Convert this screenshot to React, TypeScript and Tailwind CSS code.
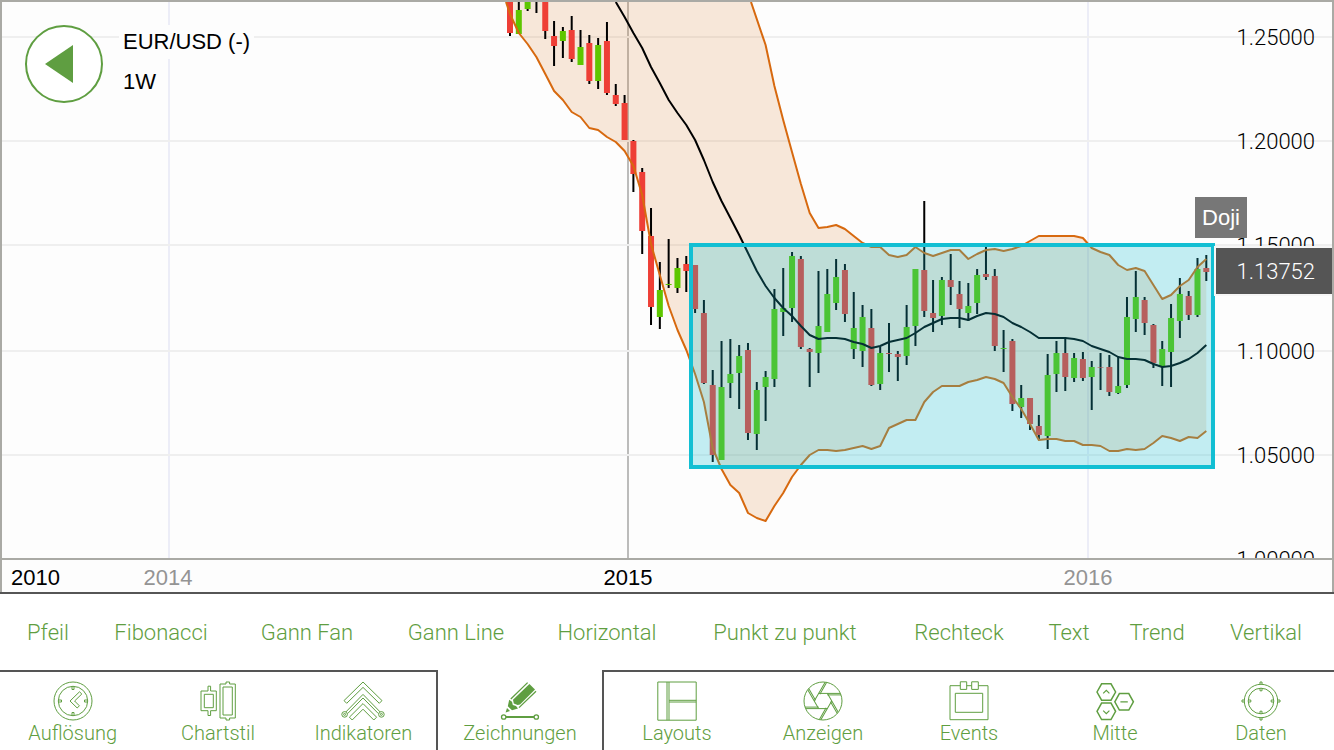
import type { ReactNode } from "react";

// Price scale and candles are stored in chart units (1334 x 592 canvas).
const START_X = 510;
const STEP = 8.814;

type Candle = [high: number, top: number, bottom: number, low: number, up: 0 | 1];

const candles: Candle[] = [
  [2, 2, 33, 36, 0],
  [2, 10, 34, 34, 1],
  [2, 2, 9, 11, 1],
  [2, 2, 2, 13, 1],
  [2, 2, 31, 39, 0],
  [21, 36, 46, 66, 0],
  [27, 31, 41, 58, 1],
  [16, 30, 59, 62, 0],
  [30, 47, 65, 65, 1],
  [35, 43, 81, 84, 0],
  [38, 45, 81, 89, 1],
  [22, 41, 93, 95, 0],
  [84, 95, 104, 106, 0],
  [95, 103, 140, 140, 0],
  [140, 141, 174, 192, 0],
  [168, 172, 231, 254, 0],
  [208, 236, 307, 325, 0],
  [262, 290, 317, 329, 1],
  [239, 284, 285, 288, 1],
  [258, 268, 288, 293, 1],
  [256, 264, 271, 292, 0],
  [265, 265, 309, 313, 0],
  [300, 313, 383, 384, 0],
  [370, 385, 455, 462, 0],
  [341, 387, 460, 460, 1],
  [339, 374, 383, 398, 1],
  [345, 356, 373, 409, 1],
  [343, 350, 433, 440, 0],
  [382, 390, 434, 450, 1],
  [371, 377, 387, 421, 1],
  [289, 309, 379, 387, 1],
  [268, 308, 312, 336, 1],
  [252, 256, 308, 322, 1],
  [256, 259, 347, 349, 0],
  [348, 349, 352, 387, 0],
  [271, 326, 353, 373, 1],
  [269, 294, 332, 332, 1],
  [259, 277, 303, 310, 1],
  [264, 270, 314, 322, 0],
  [292, 328, 349, 359, 1],
  [305, 317, 351, 367, 1],
  [309, 328, 385, 386, 0],
  [347, 353, 384, 390, 1],
  [323, 353, 354, 372, 0],
  [351, 354, 357, 381, 0],
  [305, 327, 356, 365, 1],
  [269, 269, 326, 346, 1],
  [201, 270, 311, 317, 0],
  [280, 313, 318, 332, 0],
  [277, 280, 316, 325, 1],
  [254, 280, 287, 305, 0],
  [281, 294, 309, 328, 0],
  [283, 306, 313, 321, 1],
  [269, 275, 303, 314, 1],
  [246, 274, 277, 280, 0],
  [269, 276, 346, 351, 0],
  [330, 348, 349, 372, 1],
  [339, 341, 404, 411, 0],
  [385, 398, 407, 418, 1],
  [398, 398, 424, 430, 0],
  [415, 426, 435, 439, 0],
  [354, 375, 436, 449, 1],
  [341, 353, 374, 392, 1],
  [338, 353, 377, 391, 0],
  [353, 358, 378, 382, 1],
  [352, 359, 378, 381, 0],
  [361, 367, 377, 410, 1],
  [353, 367, 367, 390, 0],
  [355, 367, 392, 396, 0],
  [357, 386, 393, 394, 1],
  [297, 317, 385, 388, 1],
  [271, 297, 319, 332, 1],
  [297, 300, 323, 335, 0],
  [324, 325, 363, 368, 0],
  [341, 349, 367, 386, 1],
  [304, 318, 352, 387, 1],
  [278, 294, 321, 338, 1],
  [291, 296, 315, 320, 0],
  [258, 269, 315, 317, 1],
  [255, 268, 272, 281, 0],
];

// Bollinger band, one value per candle
const upper = [
  45, 86, 120, 152, 184, 213, 228, 227, 225, 229, 236, 243, 247, 247, 255, 257,
  255, 247, 253, 256, 253, 250, 250, 259, 254, 250, 249, 251, 249, 246, 241,
  236, 236, 236, 236, 236, 238, 248, 252, 255, 265, 270, 268, 271, 285, 299,
  295, 286, 280, 267, 259,
];
const lower = [
  14, 33, 44, 57, 74, 91, 100, 112, 117, 128, 130, 137, 142, 151, 166, 195, 244,
  275, 306, 330, 350, 374, 402, 448, 469, 485, 493, 513, 518, 521, 506, 493,
  477, 465, 455, 450, 450, 451, 450, 448, 446, 449, 446, 428, 424, 420, 420,
  402, 392, 386, 386, 386, 382, 380, 377, 379, 383, 397, 409, 424, 440, 439,
  439, 441, 441, 445, 445, 446, 451, 451, 449, 450, 449, 443, 436, 438, 441,
  437, 438, 431,
];
const middle = [
  2, 17, 33, 48, 67, 83, 100, 113, 125, 140, 160, 182, 201, 218, 235, 253, 271,
  286, 298, 308, 316, 326, 335, 339, 338, 338, 339, 342, 344, 348, 346, 342,
  340, 338, 333, 327, 323, 319, 318, 318, 320, 316, 313, 314, 317, 323, 327,
  332, 338, 338, 338, 338, 339, 341, 346, 349, 352, 357, 359, 359, 360, 364,
  367, 366, 363, 359, 353, 345,
];

const xAt = (i: number) => START_X + i * STEP;

// series are right-aligned to the last candle
const toPoints = (values: number[]) => {
  const offset = candles.length - values.length;
  return values.map((y, i) => `${xAt(i + offset).toFixed(1)},${y}`);
};

const upperPoints = ["751,2", ...toPoints(upper)];
const lowerPoints = ["506,2", ...toPoints(lower)];
const middlePoints = toPoints(middle);

const prices = [
  { label: "1.25000", y: 37 },
  { label: "1.20000", y: 141 },
  { label: "1.15000", y: 245 },
  { label: "1.10000", y: 351 },
  { label: "1.05000", y: 455 },
  { label: "1.00000", y: 559 },
];

function Chart() {
  return (
    <svg
      viewBox="0 0 1334 592"
      className="block w-full font-['Liberation_Sans',Arial,sans-serif] text-[22px]"
      role="img"
      aria-label="EUR/USD 1W"
    >
      <defs>
        <clipPath id="plot">
          <rect x="2" y="2" width="1330" height="556" />
        </clipPath>
      </defs>
      <rect width="1334" height="592" fill="#fdfdfd" />

      <g clipPath="url(#plot)">
        <path d="M169 2V558M1088 2V558" stroke="#ecedf7" strokeWidth="2" />
        <path d="M628 2V558" stroke="#bcbcbb" strokeWidth="2" />
        {prices.map((p) => (
          <path key={p.label} d={`M2 ${p.y}H1332`} stroke="#efefef" strokeWidth="2" />
        ))}
        <g className="font-['Roboto','Liberation_Sans',sans-serif] font-light">
          {prices.map((p) => (
            <text key={p.label} x="1315" y={p.y + 8} textAnchor="end" fill="#000">
              {p.label}
            </text>
          ))}
        </g>

        <polygon
          points={[...upperPoints, ...[...lowerPoints].reverse()].join(" ")}
          fill="#d7690f"
          fillOpacity="0.15"
        />
        {candles.map(([high, top, bottom, low, up], i) => (
          <g key={i}>
            <rect x={xAt(i) - 1} y={high} width="2" height={low - high} fill="#000" />
            {i !== 3 && (
              <rect
                x={xAt(i) - 3}
                y={top}
                width="6"
                height={Math.max(bottom - top, 0.6)}
                fill={up ? "#5ec600" : "#ee3f36"}
              />
            )}
          </g>
        ))}
        <g fill="none" strokeWidth="2" strokeLinejoin="round">
          <polyline points={upperPoints.join(" ")} stroke="#d7690f" />
          <polyline points={lowerPoints.join(" ")} stroke="#d7690f" />
          <polyline points={middlePoints.join(" ")} stroke="#000" />
        </g>
      </g>

      {/* drawn rectangle */}
      <rect x="691" y="245" width="522" height="222" fill="#12bfd3" fillOpacity="0.25" />
      <rect x="691" y="245" width="522" height="222" fill="none" stroke="#12bfd3" strokeWidth="4" />

      <rect x="1195" y="197" width="52" height="41" fill="#777" />
      <text x="1221" y="225" textAnchor="middle" fill="#fff">
        Doji
      </text>
      <rect x="1214" y="246" width="118" height="50" fill="#f6f6f6" />
      <rect x="1216" y="248" width="116" height="46" fill="#555" />
      <text
        x="1315"
        y="279"
        textAnchor="end"
        fill="#fff"
        className="font-['Roboto','Liberation_Sans',sans-serif] font-light"
      >
        1.13752
      </text>

      {/* frame and time axis */}
      <path d="M1 592V1H1333V592M0 559H1334" fill="none" stroke="#aaaaa5" strokeWidth="2" />
      <text x="11" y="585" fill="#000">2010</text>
      <text x="168" y="585" textAnchor="middle" fill="#949494">2014</text>
      <text x="628" y="585" textAnchor="middle" fill="#000">2015</text>
      <text x="1088" y="585" textAnchor="middle" fill="#949494">2016</text>
    </svg>
  );
}

function Icon({ children }: { children: ReactNode }) {
  return (
    <svg
      viewBox="0 0 40 40"
      className="size-10 overflow-visible"
      fill="none"
      stroke="currentColor"
      strokeWidth="1"
      aria-hidden="true"
    >
      {children}
    </svg>
  );
}

const quarter = [0, 90, 180, 270];

const ClockIcon = () => (
  <Icon>
    <circle cx="20" cy="20" r="19" />
    <circle cx="20" cy="20" r="14.7" />
    {quarter.map((a) => (
      <path key={a} d="M19 5.3V8.5H21V5.3" transform={`rotate(${a} 20 20)`} />
    ))}
    <path d="M26.5 10.8L28.8 13L21.6 20L26.4 24.8L24.2 27L17 20Z" />
  </Icon>
);

const CandleIcon = () => (
  <Icon>
    <path d="M10 10V5.2H12.6V10H18.3V29.7H12.6V34.5H10V29.7H3V10Z" />
    <path d="M6.3 13.3H15.3V26.7H6.3Z" />
    <path d="M28 3V1H31.6V3H37.3V37H31.6V39H28V37H22V3Z" />
    <path d="M25 6H34.3V34H25Z" />
  </Icon>
);

const IndicatorIcon = () => (
  <Icon>
    <path d="M20 1L39 19.6L36.3 22.3L20 6.4L3.7 22.3L1 19.6Z" />
    <path d="M2.8 31L20 13.4L37.2 31M4.6 32.6L20 17L35.4 32.6" />
    <circle cx="1.6" cy="33.4" r="2.8" />
    <circle cx="38.4" cy="33.4" r="2.8" />
    <circle cx="1.6" cy="33.4" r="1" />
    <circle cx="38.4" cy="33.4" r="1" />
    <path d="M20 22.6L33.6 36.2L30.8 39L20 28.2L9.2 39L6.4 36.2Z" />
  </Icon>
);

const PencilIcon = () => (
  <Icon>
    <path d="M6 36H34" strokeWidth="2" />
    <circle cx="3.7" cy="36" r="2.2" strokeWidth="1.3" />
    <circle cx="36.3" cy="36" r="2.2" strokeWidth="1.3" />
    <path d="M29.4 3L35 8.4L20 23.4L17.6 24L13.8 22.4L13 18.8Z" fill="currentColor" stroke="none" />
    <path d="M27.6 1.6L10.8 18M36 10.2L19 26.6" strokeWidth="1.3" />
    <path
      d="M9.2 18.8L12 20.8L12.8 24L16 25L18 27.4L12 29.2L7.8 25.2Z"
      fill="currentColor"
      stroke="none"
    />
    <path d="M7 27L10 30L5.6 31.6Z" fill="currentColor" stroke="none" />
  </Icon>
);

const LayoutIcon = () => (
  <Icon>
    <path d="M0.8 1H39.2V39.2H0.8Z" />
    <path d="M10 1V39.2M12 1V39.2M12 19.3H39.2M12 21H39.2" />
  </Icon>
);

const ApertureIcon = () => (
  <Icon>
    <circle cx="20" cy="20" r="19" />
    {[0, 60, 120, 180, 240, 300].map((a) => (
      <path key={a} d="M15.7 12.4H37.4M24.4 13.9H38" transform={`rotate(${a} 20 20)`} />
    ))}
  </Icon>
);

const CalendarIcon = () => (
  <Icon>
    <path d="M11.3 4.7H1V38.7H39V4.7H29.3M17.7 4.7H22.7" />
    <path d="M11.3 0.8H17.7V8.4H11.3ZM22.7 0.8H29.3V8.4H22.7Z" />
    <path d="M6.3 12.3H33.7V31.3H6.3Z" />
  </Icon>
);

const HexIcon = () => (
  <Icon>
    <g strokeWidth="1.5">
      <path d="M2 11L6.6 2.8H16L20.6 11L16 19.2H6.6Z" />
      <path d="M2 30.3L6.6 22.1H16L20.6 30.3L16 38.5H6.6Z" />
      <path d="M19.8 20.8L24.4 12.6H33.8L38.4 20.8L33.8 29H24.4Z" />
    </g>
    <path d="M8.2 12.4L11.3 9.4L14.4 12.4M8.2 29.6L11.3 32.6L14.4 29.6M25.4 20.8H32.8" strokeWidth="1.2" />
  </Icon>
);

const TargetIcon = () => (
  <Icon>
    <circle cx="20" cy="20" r="16.7" />
    <circle cx="20" cy="20" r="12.8" />
    {quarter.map((a) => (
      <path
        key={a}
        d="M19 3.3V1H21V3.3M19 7.3V9.8H21V7.3"
        transform={`rotate(${a} 20 20)`}
      />
    ))}
  </Icon>
);

const tools = [
  "Pfeil",
  "Fibonacci",
  "Gann Fan",
  "Gann Line",
  "Horizontal",
  "Punkt zu punkt",
  "Rechteck",
  "Text",
  "Trend",
  "Vertikal",
];

function Tab({ label, children }: { label: string; children: ReactNode }) {
  return (
    <button type="button" className="flex flex-col items-center pt-[9px] text-xl leading-6">
      {children}
      {label}
    </button>
  );
}

export default function App() {
  return (
    <main className="flex min-h-screen flex-col bg-white font-['Liberation_Sans',Arial,sans-serif] text-[#5f9e41]">
      <section className="relative border-b-2 border-[#555]">
        <Chart />
        <div className="absolute top-[25px] left-[25px] flex gap-4">
          <button
            type="button"
            aria-label="Zurück"
            className="size-[78px] rounded-full border-2 border-[#5f9e41] bg-white"
          >
            <svg viewBox="0 0 74 74" className="size-full" fill="currentColor">
              <path d="M18 37L46 18V56Z" />
            </svg>
          </button>
          <div className="flex flex-col items-start gap-1.5 text-[22px] leading-[34px] text-black">
            <h1 className="bg-[#fdfdfd] px-1">EUR/USD (-)</h1>
            <p className="px-1">1W</p>
          </div>
        </div>
      </section>

      <nav
        aria-label="Zeichenwerkzeuge"
        className="grid h-[76px] grid-cols-[96fr_130fr_162fr_136fr_166fr_190fr_158fr_62fr_114fr_104fr] pr-4 font-['Roboto','Liberation_Sans',sans-serif] text-[22px] font-light"
      >
        {tools.map((tool) => (
          <button key={tool} type="button" className="whitespace-nowrap">
            {tool}
          </button>
        ))}
      </nav>

      <nav
        aria-label="Menü"
        className="grid min-h-20 grow grid-cols-[438fr_164fr_732fr] font-['Roboto','Liberation_Sans',sans-serif] font-light"
      >
        <div className="grid grid-cols-3 border-t-2 border-r-2 border-[#555]">
          <Tab label="Auflösung">
            <ClockIcon />
          </Tab>
          <Tab label="Chartstil">
            <CandleIcon />
          </Tab>
          <Tab label="Indikatoren">
            <IndicatorIcon />
          </Tab>
        </div>
        <div className="grid pt-0.5">
          <Tab label="Zeichnungen">
            <PencilIcon />
          </Tab>
        </div>
        <div className="grid grid-cols-5 border-t-2 border-l-2 border-[#555]">
          <Tab label="Layouts">
            <LayoutIcon />
          </Tab>
          <Tab label="Anzeigen">
            <ApertureIcon />
          </Tab>
          <Tab label="Events">
            <CalendarIcon />
          </Tab>
          <Tab label="Mitte">
            <HexIcon />
          </Tab>
          <Tab label="Daten">
            <TargetIcon />
          </Tab>
        </div>
      </nav>
    </main>
  );
}
